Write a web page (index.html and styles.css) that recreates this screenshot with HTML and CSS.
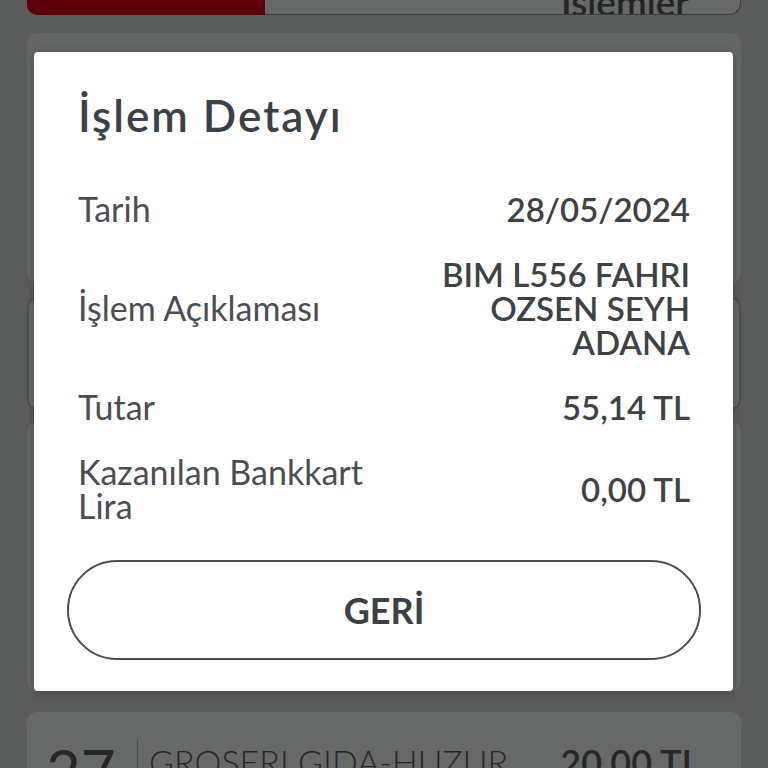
FILE: index.html
```html
<!DOCTYPE html>
<html lang="tr">
<head>
<meta charset="utf-8">
<title>İşlem Detayı</title>
<link rel="stylesheet" href="styles.css">
</head>
<body>
<div class="page">
  <div class="tabs">
    <div class="tab tab-active"></div>
    <div class="tab tab-other"><span>İşlemler</span></div>
  </div>
  <div class="card card-top"></div>
  <div class="card card-input"></div>
  <div class="card card-mid"></div>
  <div class="card card-list">
    <div class="list-row">
      <span class="day">27</span>
      <span class="desc">GROSERI GIDA-HUZUR</span>
      <span class="amount">20,00 TL</span>
    </div>
  </div>
</div>

<div class="modal">
  <h1 class="modal-title">İşlem Detayı</h1>
  <div class="detail-row">
    <div class="label">Tarih</div>
    <div class="value">28/05/2024</div>
  </div>
  <div class="detail-row">
    <div class="label">İşlem Açıklaması</div>
    <div class="value">BIM L556 FAHRI OZSEN SEYH ADANA</div>
  </div>
  <div class="detail-row">
    <div class="label">Tutar</div>
    <div class="value">55,14 TL</div>
  </div>
  <div class="detail-row">
    <div class="label">Kazanılan Bankkart Lira</div>
    <div class="value">0,00 TL</div>
  </div>
  <button class="back-btn">GERİ</button>
</div>
</body>
</html>
```
FILE: styles.css
```css
html, body {
  margin: 0;
  padding: 0;
}
body {
  width: 768px;
  height: 768px;
  overflow: hidden;
  background: #5b5c5c;
  font-family: "Lato", "Open Sans", sans-serif;
  position: relative;
}
.page {
  padding: 0 27px;
  height: 768px;
  overflow: hidden;
  display: flex;
  flex-direction: column;
}
.tabs {
  display: flex;
  height: 15px;
  flex-shrink: 0;
}
.tab {
  height: 15px;
  box-sizing: border-box;
}
.tab-active {
  width: 238px;
  background: #5d0008;
  border-bottom-left-radius: 10px;
}
.tab-other {
  flex: 1;
  background: #676868;
  border: 1px solid #3a3b3b;
  border-top: none;
  border-left: none;
  border-bottom-right-radius: 12px;
  position: relative;
  overflow: hidden;
}
.tab-other span {
  position: absolute;
  left: 296px;
  top: -18px;
  font-size: 37px;
  font-weight: 600;
  line-height: 40px;
  color: #232424;
}
.card {
  background: #646565;
  border-radius: 10px;
  flex-shrink: 0;
}
.card-top {
  margin-top: 18px;
  height: 250px;
}
.card-input {
  margin-top: 14px;
  height: 113px;
  box-sizing: border-box;
  border: 2px solid #4f5050;
  background: #676868;
}
.card-mid {
  margin-top: 12px;
  height: 270px;
}
.card-list {
  margin-top: 20px;
  height: 120px;
  background: #676868;
}
.list-row {
  display: flex;
  align-items: flex-start;
  padding: 26px 41px 0 19px;
  color: #262727;
}
.day {
  font-size: 60px;
  font-weight: 400;
  line-height: 60px;
  width: 91px;
  margin-top: 2px;
  height: 60px;
  border-right: 1px solid #4a4b4b;
}
.desc {
  font-size: 34px;
  font-weight: 300;
  line-height: 40px;
  padding-left: 11px;
  margin-top: 4px;
  flex: 1;
}
.amount {
  font-size: 36px;
  font-weight: 600;
  line-height: 40px;
  margin-top: 4px;
}
.modal {
  position: absolute;
  left: 34px;
  top: 52px;
  width: 699px;
  height: 639px;
  box-sizing: border-box;
  background: #ffffff;
  border-radius: 4px;
  padding: 38px 43px 0 44px;
  display: flex;
  flex-direction: column;
  box-shadow: 0 2px 10px rgba(0, 0, 0, 0.25);
}
.modal-title {
  margin: 0 0 52px;
  font-size: 44px;
  line-height: 50px;
  font-weight: 600;
  letter-spacing: 2px;
  color: #3b4145;
}
.detail-row {
  display: flex;
  align-items: center;
  margin-bottom: 31px;
  font-size: 34px;
  line-height: 34px;
  color: #3d4245;
}
.label {
  width: 50%;
  font-weight: 400;
  color: #4a4e51;
}
.value {
  width: 50%;
  text-align: right;
  font-size: 33px;
  font-weight: 600;
}
.back-btn {
  margin: 6px -11px 0 -11px;
  height: 100px;
  flex-shrink: 0;
  border: 2px solid #4b4f52;
  border-radius: 50px;
  background: #ffffff;
  font-family: inherit;
  font-size: 36px;
  font-weight: 700;
  color: #3b4145;
}
```
